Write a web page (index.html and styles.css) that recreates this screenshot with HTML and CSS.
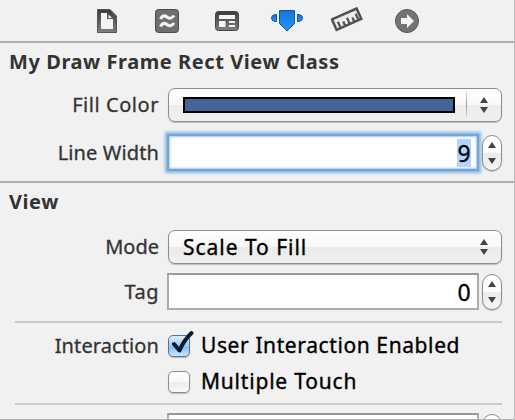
FILE: index.html
```
<!DOCTYPE html>
<html lang="en">
<head>
<meta charset="utf-8">
<title>Attributes Inspector</title>
<link rel="stylesheet" href="styles.css">
</head>
<body>
<svg width="0" height="0" class="defs">
  <defs>
    <linearGradient id="gray" x1="0" y1="0" x2="0" y2="1"><stop offset="0" stop-color="#3c3c3c"/><stop offset="1" stop-color="#808080"/></linearGradient>
    <linearGradient id="blue" x1="0" y1="0" x2="0" y2="1"><stop offset="0" stop-color="#1673d6"/><stop offset="1" stop-color="#2a94f4"/></linearGradient>
  </defs>
</svg>
<main class="panel">
  <nav class="tabs">
    <svg width="20" height="24" viewBox="0 0 20 24"><path d="M.5 .5H13L19.500 7V23.500H.5Z" fill="url(#gray)" stroke="#555"/><path d="M4 4H10V10H16V20H4Z" fill="#f5f5f5"/><path d="M11.500 5.500L15 9H11.500Z" fill="#f5f5f5"/></svg>
    <svg class="effects" width="24" height="24" viewBox="0 0 24 24"><rect x=".5" y=".5" width="23" height="23" rx="3" fill="#6f6f6f" stroke="#4b4b4b"/><path d="M5.500 10Q8 5 12 8T19 6.500M5.500 17.500Q8 12.500 12 15.500T19 14" fill="none" stroke="#f5f5f5" stroke-width="3"/></svg>
    <svg class="template" width="24" height="20" viewBox="0 0 24 20"><rect x=".5" y=".5" width="23" height="19" rx="3" fill="url(#gray)" stroke="#444"/><path d="M4 4H20V8H4ZM4 10H10.500V16H4ZM14 10H20V12H14ZM14 14H20V16H14Z" fill="#f5f5f5"/></svg>
    <svg class="attributes" width="32" height="22" viewBox="0 0 32 22"><path d="M8.500 .5H23.500V13.500L16 21L8.500 13.500Z" fill="url(#blue)" stroke="#0b58b4"/><path d="M5.500 4.500V11.500H4Q.5 11 .5 8T4 4.500ZM26.500 4.500V11.500H28Q31.500 11 31.500 8T28 4.500Z" fill="url(#blue)" stroke="#0b58b4"/></svg>
    <svg class="size" width="32" height="25" viewBox="0 0 32 25"><g transform="translate(15.500 12) rotate(-24)"><rect x="-13.500" y="-5.500" width="27" height="11.500" fill="#ededed" stroke="#505050" stroke-width="2.500"/><path d="M-9 6V-1M-4 6V1M1 6V-1M6 6V1M10.500 6V-1" stroke="#505050" stroke-width="2.200"/></g></svg>
    <svg class="links" width="24" height="24" viewBox="0 0 24 24"><circle cx="12" cy="12" r="11.500" fill="#747474" stroke="#555"/><path d="M6 9H12V5L19 12L12 19V15H6Z" fill="#f5f5f5"/></svg>
  </nav>

  <section class="section custom">
    <h2 class="title">My Draw Frame Rect View Class</h2>
    <div class="row fill-row">
      <span class="label fill">Fill Color</span>
      <div class="popup"><span class="swatch"></span><span class="divider"></span>
        <svg class="arrows" width="8" height="16"><path d="M0 6L4 0L8 6ZM0 10L4 16L8 10Z"/></svg></div>
    </div>
    <div class="row line-row">
      <span class="label line">Line Width</span>
      <div class="field focused"><span class="selected">9</span></div>
      <div class="stepper"><svg width="8" height="22"><path d="M0 6L4 0L8 6ZM0 16L4 22L8 16Z"/></svg></div>
    </div>
  </section>

  <section class="section view">
    <h2 class="title">View</h2>
    <div class="row mode-row">
      <span class="label mode">Mode</span>
      <div class="popup"><span class="value scale">Scale To Fill</span>
        <svg class="arrows" width="8" height="16"><path d="M0 6L4 0L8 6ZM0 10L4 16L8 10Z"/></svg></div>
    </div>
    <div class="row tag-row">
      <span class="label tag">Tag</span>
      <div class="field"><span class="number">0</span></div>
      <div class="stepper"><svg width="8" height="22"><path d="M0 6L4 0L8 6ZM0 16L4 22L8 16Z"/></svg></div>
    </div>
    <hr class="rule">
    <div class="row check-row">
      <span class="label interaction">Interaction</span>
      <span class="box checked"><svg class="tick" width="25" height="26" viewBox="0 0 25 26"><path d="M5 14L10.500 20.500Q15 10 22.500 3" fill="none" stroke="#0b1a33" stroke-width="4" stroke-linecap="round" stroke-linejoin="round"/></svg></span>
      <span class="value user">User Interaction Enabled</span>
    </div>
    <div class="row check-row second">
      <span class="label"></span>
      <span class="box"></span>
      <span class="value multiple">Multiple Touch</span>
    </div>
    <hr class="rule lower">
    <div class="row next-row">
      <span class="label"></span>
      <div class="field"></div>
      <div class="stepper"></div>
    </div>
  </section>
</main>
</body>
</html>
```

FILE: styles.css
```
* { box-sizing: border-box; }
body { margin: 0; background: #f1f1f1; font-family: "Noto Sans", "Open Sans", sans-serif; }
.defs { display: block; height: 0; }
.panel { width: 515px; height: 420px; overflow: hidden; border-right: 1px solid #b9b9b9; border-bottom: 1px solid #b0b0b0; background: #f1f1f1; }
.tabs { height: 41px; padding-left: 97px; display: flex; align-items: center; }
.tabs svg { flex: none; }
.effects { margin-left: 38px; }
.template { margin-left: 36px; }
.attributes { margin-left: 32px; }
.size { margin-left: 28px; margin-top: -2px; }
.links { margin-left: 32px; }
.section { border-top: 2px solid #b0b0b0; }
.custom { height: 140px; }
.title { margin: 0; padding: 5px 0 0 9px; height: 45px; font-size: 20px; line-height: 27px; font-weight: 700; letter-spacing: 0.57px; color: #333; white-space: nowrap; }
.row { display: flex; align-items: center; }
.label { width: 159px; margin-right: 9px; flex: none; text-align: right; font-size: 20px; line-height: 28px; color: #333; white-space: nowrap; -webkit-text-stroke: 0.3px #333; }
.fill { letter-spacing: 0.55px; }
.line { letter-spacing: 0.12px; }
.tag { letter-spacing: 0.5px; }
.interaction { letter-spacing: 0.1px; }
.value { font-size: 21px; line-height: 28px; color: #000; white-space: nowrap; -webkit-text-stroke: 0.35px #000; }
.scale { letter-spacing: 0.97px; }
.user { letter-spacing: 0.6px; }
.multiple { letter-spacing: 0.8px; }
.user, .multiple { margin-top: -2px; }
.popup { width: 334px; height: 34px; display: flex; align-items: center; padding: 0 13px 0 14px; border: 1px solid #8c8c8c; border-radius: 7px; background: linear-gradient(#fff 0%, #f8f8f8 49%, #ebebeb 51%, #f0f0f0 100%); box-shadow: 0 1px 1px #bbb; }
.swatch { width: 272px; height: 16px; border: 2px solid #000; background: #426496; }
.divider { width: 1px; height: 26px; margin-left: 11px; background: linear-gradient(#ddd, #999 50%, #ddd); }
.arrows { margin-left: auto; fill: #444; }
.field { width: 312px; height: 37px; margin-left: -1px; display: flex; align-items: center; justify-content: flex-end; padding-right: 6px; border: 2px solid #ababab; border-top-color: #999; background: #fff; font-size: 23px; line-height: 28px; -webkit-text-stroke: 0.3px #000; }
.focused { border-color: #75a5d5; box-shadow: 0 0 3px 2px #85b4e3, inset 0 0 2px 1px #a5c8ea; }
.selected { width: 14px; height: 28px; background: #b3d4ff; text-align: center; }
.number { width: 14px; text-align: center; }
.stepper { width: 20px; height: 36px; margin-left: 3px; display: flex; align-items: center; justify-content: center; border: 1px solid #8c8c8c; border-radius: 10px; background: linear-gradient(#fff 0%, #fafafa 49%, #ebebeb 51%, #f5f5f5 100%); box-shadow: 0 1px 1px #bbb; fill: #444; }
.line-row { margin-top: 12px; height: 37px; }
.view .title { height: 47px; }
.tag-row { margin-top: 9px; height: 37px; }
.rule { margin: 11px 12px 0 15px; border: 0; height: 2px; background: #c9c9c9; }
.check-row { margin-top: 12px; height: 22px; }
.second { margin-top: 14px; }
.box { position: relative; flex: none; width: 22px; height: 22px; margin-right: 11px; border: 1px solid #8c8c8c; border-radius: 5px; background: linear-gradient(#fff, #f8f8f8 49%, #ebebeb 51%, #fafafa); box-shadow: 0 1px 1px #bbb; }
.checked { border-color: #5c6f91; background: linear-gradient(#e3effb, #9dc9f5 50%, #84bcf2 55%, #c5eaff); }
.tick { position: absolute; left: 0; top: -6px; }
.lower { margin-top: 10px; }
.next-row { margin-top: 8px; height: 37px; }
```
